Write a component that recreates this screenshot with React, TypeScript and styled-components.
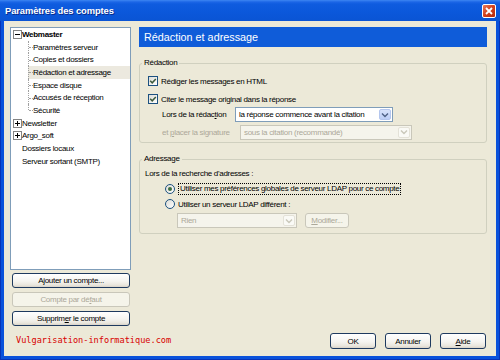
import React from 'react';
import styled, { createGlobalStyle } from 'styled-components';

const Global = createGlobalStyle`
  html, body { margin: 0; padding: 0; width: 500px; height: 360px; overflow: hidden; background: #0A52DB; }
  * { box-sizing: border-box; }
`;

const Window = styled.div`
  width: 500px;
  height: 360px;
  display: flex;
  flex-direction: column;
  background: #0A52DB;
  box-shadow: inset 0 0 0 1px #0834B8;
  font-family: "Liberation Sans", Arial, sans-serif;
  font-size: 8px;
  letter-spacing: -0.3px;
  color: #000;
`;

const TitleBar = styled.div`
  height: 21px;
  flex: none;
  display: flex;
  align-items: center;
  justify-content: space-between;
  padding: 0 4px 0 5px;
  background: linear-gradient(#3D86F2 0, #1C66E6 2px, #0F5CDF 4px, #0B58DB 55%, #0A54D4 100%);
`;

const Title = styled.span`
  color: #fff;
  font-weight: bold;
  font-size: 9.4px;
  letter-spacing: -0.1px;
  text-shadow: 1px 1px 0 #0A2A8A;
`;

const CloseBtn = styled.div`
  width: 14px;
  height: 14px;
  border: 1px solid #fff;
  border-radius: 2px;
  background: linear-gradient(135deg, #E9795A, #D3401C 50%, #B52A0A);
  display: flex;
  align-items: center;
  justify-content: center;
`;

const Body = styled.div`
  flex: 1;
  display: flex;
  gap: 8px;
  margin: 0 4px 4px 4px;
  padding: 6px 9px 7px 6px;
  background: #ECE9D8;
  min-height: 0;
`;

const LeftCol = styled.div`
  width: 121px;
  flex: none;
  display: flex;
  flex-direction: column;
`;

const Tree = styled.div`
  height: 243px;
  flex: none;
  background: #fff;
  border: 1px solid #7F9DB9;
  padding: 0;
`;

const TreeRow = styled.div<{ $indent: number }>`
  height: 12.7px;
  display: flex;
  align-items: stretch;
  padding-left: ${(p) => p.$indent}px;
`;

const Expander = styled.span`
  width: 9px;
  flex: none;
  display: flex;
  align-items: center;
`;

const Item = styled.span<{ $selected?: boolean; $bold?: boolean }>`
  flex: 1;
  display: flex;
  align-items: center;
  white-space: nowrap;
  font-weight: ${(p) => (p.$bold ? 'bold' : 'normal')};
  background: ${(p) => (p.$selected ? '#ECE9DF' : 'transparent')};
`;

const Connector = styled.span<{ $last?: boolean }>`
  position: relative;
  width: 5px;
  align-self: stretch;
  flex: none;
  &::before {
    content: '';
    position: absolute;
    left: 0;
    top: 0;
    height: ${(p) => (p.$last ? '50%' : '100%')};
    border-left: 1px dotted #A0A0A0;
  }
  &::after {
    content: '';
    position: absolute;
    left: 1px;
    top: 50%;
    width: 4px;
    border-top: 1px dotted #A0A0A0;
  }
`;

const Button = styled.button<{ $w: number; $h: number }>`
  font: inherit;
  letter-spacing: inherit;
  width: ${(p) => p.$w}px;
  height: ${(p) => p.$h}px;
  padding: 0;
  border: 1px solid #1E3A5F;
  border-radius: 3px;
  background: linear-gradient(#FFFFFF, #F5F4F0 55%, #E9E6DD 85%, #D9D3C8);
  color: #000;
  white-space: nowrap;
  &:disabled {
    border-color: #C9C7BA;
    color: #ACA899;
    background: #F5F4EA;
  }
`;

const LeftButton = styled(Button)`
  margin: 4px 0 0 2px;
  &:first-of-type { margin-top: 3px; }
`;

const ButtonStack = styled.div`
  display: flex;
  flex-direction: column;
`;

const Brand = styled.div`
  margin-top: 8px;
  padding-left: 6px;
  height: 12px;
  line-height: 12px;
  font-family: "DejaVu Sans Mono", "Liberation Mono", monospace;
  font-size: 8.6px;
  letter-spacing: 0;
  color: #D80000;
  white-space: nowrap;
`;

const RightCol = styled.div`
  flex: 1;
  display: flex;
  flex-direction: column;
  min-width: 0;
`;

const Header = styled.div`
  height: 20px;
  flex: none;
  display: flex;
  align-items: center;
  padding-left: 5px;
  background: #0F5CD9;
  color: #fff;
  font-size: 10.8px;
  letter-spacing: 0;
`;

const Group = styled.fieldset`
  margin: 11px 0 0 0;
  padding: 0;
  border: 1px solid #D0D0BF;
  border-radius: 3px;
  min-width: 0;
`;

const Legend = styled.legend`
  margin-left: 2px;
  padding: 0 2px;
  line-height: 10px;
  font-size: 8px;
`;

const GroupInner = styled.div<{ $pt: number; $pb: number; $pl: number }>`
  padding: ${(p) => p.$pt}px 0 ${(p) => p.$pb}px ${(p) => p.$pl}px;
  display: flex;
  flex-direction: column;
`;

const Row = styled.div<{ $mt?: number; $pl?: number; $h?: number; $gap?: number }>`
  display: flex;
  align-items: center;
  height: ${(p) => p.$h ?? 12}px;
  margin-top: ${(p) => p.$mt ?? 0}px;
  padding-left: ${(p) => p.$pl ?? 0}px;
  gap: ${(p) => p.$gap ?? 3}px;
  white-space: nowrap;
`;

const CheckBox = styled.span`
  width: 10px;
  height: 10px;
  flex: none;
  border: 1px solid #1C5180;
  background: linear-gradient(135deg, #DCDCD6, #FFFFFF);
  display: flex;
  align-items: center;
  justify-content: center;
`;

const Radio = styled.span<{ $on?: boolean }>`
  width: 10px;
  height: 10px;
  flex: none;
  border: 1px solid #1C5180;
  border-radius: 50%;
  background: linear-gradient(135deg, #DCDCD6, #FFFFFF);
  display: flex;
  align-items: center;
  justify-content: center;
  &::after {
    content: '';
    width: 4px;
    height: 4px;
    border-radius: 50%;
    background: ${(p) => (p.$on ? '#3E6E3E' : 'transparent')};
  }
`;

const FieldLabel = styled.span<{ $w: number; $disabled?: boolean }>`
  width: ${(p) => p.$w}px;
  flex: none;
  color: ${(p) => (p.$disabled ? '#ACA899' : '#000')};
`;

const Focus = styled.span`
  border: 1px dotted #000;
  padding: 0 1px;
  line-height: 10px;
`;

const Select = styled.div<{ $w: number; $disabled?: boolean }>`
  width: ${(p) => p.$w}px;
  height: 15px;
  flex: none;
  display: flex;
  align-items: center;
  border: 1px solid ${(p) => (p.$disabled ? '#C9C7BA' : '#7F9DB9')};
  background: ${(p) => (p.$disabled ? '#F5F4EC' : '#FFFFFF')};
  color: ${(p) => (p.$disabled ? '#ACA899' : '#000')};
  padding: 0 1px 0 0;
`;

const SelectText = styled.span`
  flex: 1;
  padding-left: 3px;
  overflow: hidden;
  white-space: nowrap;
`;

const DropBtn = styled.span<{ $disabled?: boolean }>`
  width: 12px;
  height: 11px;
  flex: none;
  border-radius: 2px;
  display: flex;
  align-items: center;
  justify-content: center;
  border: 1px solid ${(p) => (p.$disabled ? '#E4E2D8' : '#B4C6EE')};
  background: ${(p) => (p.$disabled ? '#FAFAF6' : 'linear-gradient(#D8E3FB, #BCCEF6)')};
`;

const Footer = styled.div`
  margin-top: auto;
  display: flex;
  justify-content: flex-end;
  gap: 9px;
  padding-right: 1px;
`;

const U = styled.span`
  text-decoration: underline;
`;

const Chevron = ({ color }: { color: string }) => (
  <svg width="8" height="6" viewBox="0 0 8 6">
    <path d="M1 1.5 L4 4.5 L7 1.5" fill="none" stroke={color} strokeWidth="1.4" />
  </svg>
);

const Box = ({ open }: { open: boolean }) => (
  <svg width="9" height="9" viewBox="0 0 9 9">
    <rect x="0.5" y="0.5" width="8" height="8" fill="#fff" stroke="#848484" />
    <path d="M2 4.5 H7" stroke="#000" strokeWidth="1" />
    {!open && <path d="M4.5 2 V7" stroke="#000" strokeWidth="1" />}
  </svg>
);

const Check = () => (
  <svg width="8" height="8" viewBox="0 0 8 8">
    <path d="M1.2 3.8 L3.2 5.8 L6.8 2" fill="none" stroke="#3B5A3B" strokeWidth="1.5" />
  </svg>
);

const children = [
  'Paramètres serveur',
  'Copies et dossiers',
  'Rédaction et adressage',
  'Espace disque',
  'Accusés de réception',
  'Sécurité',
];

export default function App() {
  return (
    <Window>
      <Global />
      <TitleBar>
        <Title>Paramètres des comptes</Title>
        <CloseBtn>
          <svg width="8" height="8" viewBox="0 0 8 8">
            <path d="M1 1 L7 7 M7 1 L1 7" stroke="#fff" strokeWidth="1.8" />
          </svg>
        </CloseBtn>
      </TitleBar>
      <Body>
        <LeftCol>
          <Tree>
            <TreeRow $indent={2}>
              <Expander><Box open /></Expander>
              <Item $bold>Webmaster</Item>
            </TreeRow>
            {children.map((c, i) => (
              <TreeRow key={c} $indent={17}>
                <Item $selected={i === 2}>
                  <Connector $last={i === children.length - 1} />
                  {c}
                </Item>
              </TreeRow>
            ))}
            <TreeRow $indent={2}>
              <Expander><Box open={false} /></Expander>
              <Item>Newsletter</Item>
            </TreeRow>
            <TreeRow $indent={2}>
              <Expander><Box open={false} /></Expander>
              <Item>Argo_soft</Item>
            </TreeRow>
            <TreeRow $indent={11}>
              <Item>Dossiers locaux</Item>
            </TreeRow>
            <TreeRow $indent={11}>
              <Item>Serveur sortant (SMTP)</Item>
            </TreeRow>
          </Tree>
          <ButtonStack>
            <LeftButton $w={118} $h={15}>A<U>j</U>outer un compte...</LeftButton>
            <LeftButton $w={118} $h={15} disabled>Compte par dé<U>f</U>aut</LeftButton>
            <LeftButton $w={118} $h={15}>Supprim<U>e</U>r le compte</LeftButton>
          </ButtonStack>
          <Brand>Vulgarisation-informatique.com</Brand>
        </LeftCol>
        <RightCol>
          <Header>Rédaction et adressage</Header>
          <Group>
            <Legend>Rédaction</Legend>
            <GroupInner $pt={7} $pb={3} $pl={8}>
              <Row>
                <CheckBox><Check /></CheckBox>
                Rédiger les messages en HTML
              </Row>
              <Row $mt={6}>
                <CheckBox><Check /></CheckBox>
                Citer le message original dans la réponse
              </Row>
              <Row $mt={2} $pl={14} $h={15} $gap={0}>
                <FieldLabel $w={73}>Lors de la rédac<U>t</U>ion</FieldLabel>
                <Select $w={158}>
                  <SelectText>la réponse commence avant la citation</SelectText>
                  <DropBtn><Chevron color="#4D6185" /></DropBtn>
                </Select>
              </Row>
              <Row $mt={3} $pl={14} $h={14} $gap={0}>
                <FieldLabel $w={78} $disabled>et <U>p</U>lacer la signature</FieldLabel>
                <Select $w={172} $disabled>
                  <SelectText>sous la citation (recommandé)</SelectText>
                  <DropBtn $disabled><Chevron color="#C9C7BA" /></DropBtn>
                </Select>
              </Row>
            </GroupInner>
          </Group>
          <Group>
            <Legend>Adressage</Legend>
            <GroupInner $pt={3} $pb={5} $pl={5}>
              <Row>Lors de la recherche d'adresses :</Row>
              <Row $mt={4} $pl={20}>
                <Radio $on />
                <Focus>Utiliser mes préférences globales de serveur LDAP pour ce compte</Focus>
              </Row>
              <Row $mt={3} $pl={20}>
                <Radio />
                Utiliser un serveur LDAP différent :
              </Row>
              <Row $mt={3} $pl={32} $h={15} $gap={8}>
                <Select $w={120} $disabled>
                  <SelectText>Rien</SelectText>
                  <DropBtn $disabled><Chevron color="#C9C7BA" /></DropBtn>
                </Select>
                <Button $w={44} $h={15} disabled><U>M</U>odifier...</Button>
              </Row>
            </GroupInner>
          </Group>
          <Footer>
            <Button $w={46} $h={16}>OK</Button>
            <Button $w={46} $h={16}>Annuler</Button>
            <Button $w={46} $h={16}><U>A</U>ide</Button>
          </Footer>
        </RightCol>
      </Body>
    </Window>
  );
}
